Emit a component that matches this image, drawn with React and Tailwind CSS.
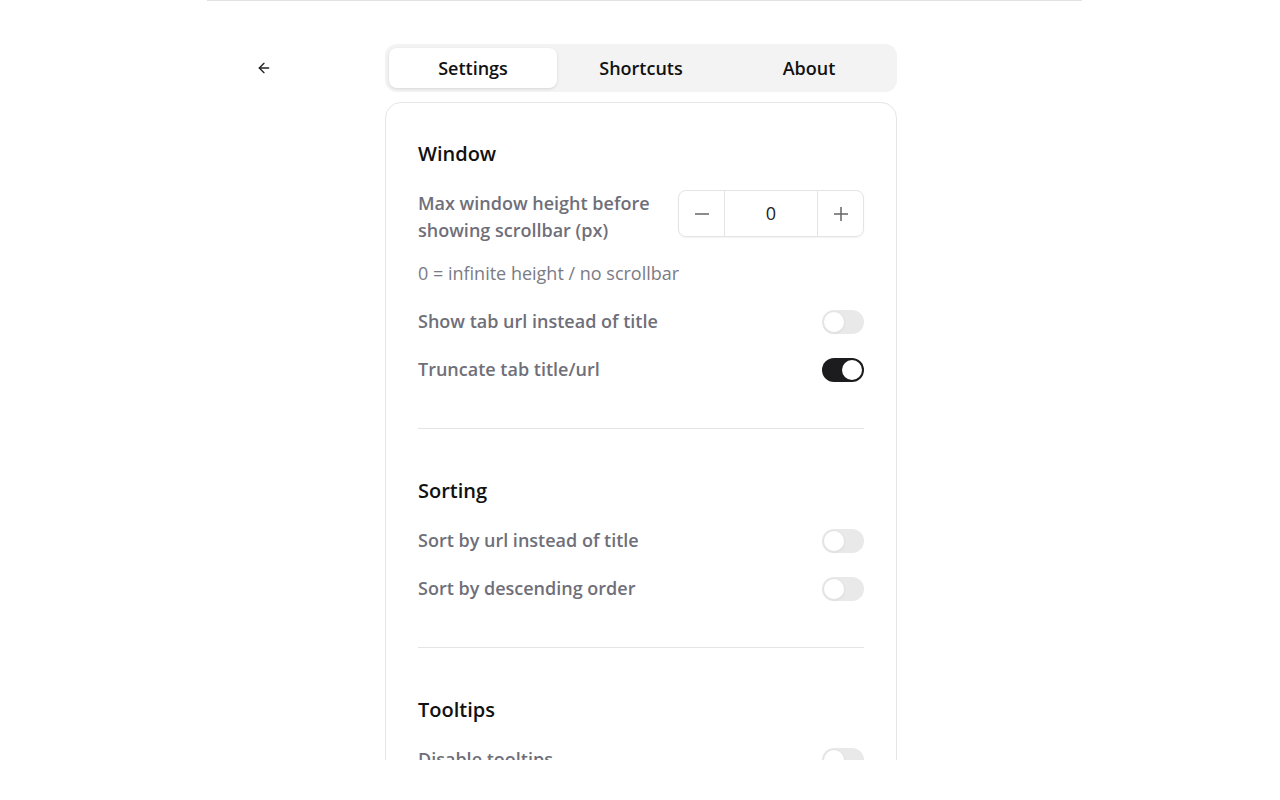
// Options page: tab switcher on top, one card of grouped settings below.
const font = { fontFamily: '"Open Sans", "Noto Sans", sans-serif' };

const Toggle = ({ on }) => (
  <span
    className={
      "relative inline-flex h-6 w-[42px] shrink-0 items-center rounded-full p-0.5 " +
      (on ? "bg-[#1c1c1e] justify-end" : "bg-[#e9e9ea] justify-start")
    }
  >
    <span
      className={
        "h-5 w-5 rounded-full bg-white " +
        (on ? "ring-1 ring-[#1c1c1e]" : "ring-1 ring-[#e4e4e4] shadow-sm")
      }
    />
  </span>
);

const Row = ({ label, on }) => (
  <div className="flex items-center justify-between h-[27px]">
    <span className="text-[18px] leading-[27px] font-semibold text-[#6f6f79]">{label}</span>
    <Toggle on={on} />
  </div>
);

const Heading = ({ children }) => (
  <h3 className="text-[20px] leading-[28px] font-semibold text-[#111] mb-px">{children}</h3>
);

export default function App() {
  return (
    <div className="min-h-screen bg-white" style={font}>
      <div className="w-[875px] h-[760px] overflow-hidden border-t border-[#e2e2e2] ml-[207px]">
        <div className="flex items-start pt-[43px]">
          <button className="ml-[49px] mt-[16px] w-4 h-4 text-[#222]">
            <svg viewBox="0 0 24 24" width="16" height="16" fill="none" stroke="currentColor" strokeWidth="2" strokeLinecap="round" strokeLinejoin="round">
              <path d="M19 12H5" />
              <path d="M12 19l-7-7 7-7" />
            </svg>
          </button>

          <div className="ml-[113px] w-[512px] flex flex-col gap-[10px]">
            {/* Tabs */}
            <div className="flex h-12 rounded-xl bg-[#f3f3f3] p-1">
              <div className="flex-1 flex items-center justify-center rounded-lg bg-white shadow-[0_1px_3px_rgba(0,0,0,0.12)] text-[18px] font-semibold text-[#111]">
                Settings
              </div>
              <div className="flex-1 flex items-center justify-center text-[18px] font-semibold text-[#111]">
                Shortcuts
              </div>
              <div className="flex-1 flex items-center justify-center text-[18px] font-semibold text-[#111]">
                About
              </div>
            </div>

            {/* Settings card */}
            <div className="rounded-2xl border border-[#e6e6e6] px-8 pt-[37px]">
              <section className="flex flex-col gap-[21px] pb-[45px] border-b border-[#e4e4e4]">
                <Heading>Window</Heading>
                <div className="flex flex-col gap-4">
                  <div className="flex items-start justify-between">
                    <span className="w-[250px] text-[18px] leading-[27px] font-semibold text-[#6f6f79]">
                      Max window height before showing scrollbar (px)
                    </span>
                    <div className="flex h-[47px] w-[186px] rounded-lg border border-[#e4e4e4] shadow-[0_1px_2px_rgba(0,0,0,0.05)] text-[#333]">
                      <span className="w-[46px] flex items-center justify-center border-r border-[#e4e4e4] text-[#666]">
                        <svg width="16" height="16" viewBox="0 0 16 16" stroke="currentColor" strokeWidth="1.5"><path d="M1 8h14" /></svg>
                      </span>
                      <span className="flex-1 flex items-center justify-center text-[18px] text-[#222]">0</span>
                      <span className="w-[46px] flex items-center justify-center border-l border-[#e4e4e4] text-[#666]">
                        <svg width="16" height="16" viewBox="0 0 16 16" stroke="currentColor" strokeWidth="1.5"><path d="M1 8h14M8 1v14" /></svg>
                      </span>
                    </div>
                  </div>
                  <p className="text-[18px] leading-[27px] text-[#7b7b84]">0 = infinite height / no scrollbar</p>
                </div>
                <Row label="Show tab url instead of title" />
                <Row label="Truncate tab title/url" on />
              </section>

              <section className="flex flex-col gap-[21px] pt-12 pb-[45px] border-b border-[#e4e4e4]">
                <Heading>Sorting</Heading>
                <Row label="Sort by url instead of title" />
                <Row label="Sort by descending order" />
              </section>

              <section className="flex flex-col gap-[21px] pt-12 pb-10">
                <Heading>Tooltips</Heading>
                <Row label="Disable tooltips" />
              </section>
            </div>
          </div>
        </div>
      </div>
    </div>
  );
}
